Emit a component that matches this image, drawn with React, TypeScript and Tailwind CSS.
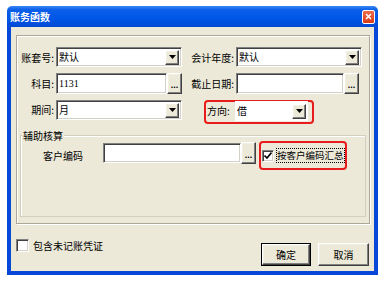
import React from "react";

const raised =
  "bg-[#ece9d8] border border-t-white border-l-white border-r-[#404040] border-b-[#404040] shadow-[inset_-1px_-1px_0_#808080,inset_1px_1px_0_#f1efe2]";
const sunken =
  "bg-white border border-t-[#808080] border-l-[#808080] border-r-white border-b-white shadow-[inset_1px_1px_0_#404040,inset_-1px_-1px_0_#d4d0c8]";

function DropBtn() {
  return (
    <div className={`w-[14px] h-[15px] flex items-center justify-center ${raised}`}>
      <svg width="7" height="4" viewBox="0 0 7 4">
        <path d="M0 0H7L3.5 4Z" fill="#000" />
      </svg>
    </div>
  );
}

function Combo({ text, w, plain }: { text: string; w: string; plain?: boolean }) {
  return (
    <div
      className={`${w} h-[20px] flex items-center pl-[2px] pr-[2px] ${
        plain ? "bg-white" : sunken
      }`}
    >
      <span className="flex-1 leading-none">{text}</span>
      <DropBtn />
    </div>
  );
}

function Dots({ h = "h-[21px]" }: { h?: string }) {
  return (
    <div className={`w-[15px] ${h} flex items-end justify-center pb-[3px] ${raised}`}>
      <span className="text-[9px] leading-none font-['Liberation_Sans',sans-serif] font-bold">...</span>
    </div>
  );
}

export default function App() {
  return (
    <div className="w-[387px] h-[282px] bg-white pt-[6px] pl-[7px] font-['Noto_Sans_CJK_SC','Noto_Sans',sans-serif] text-[10px] text-black">
      <div className="w-[371px] h-[269px] flex flex-col">
        {/* title bar */}
        <div className="h-[21px] rounded-t-[5px] bg-[linear-gradient(180deg,#3b87f5_0%,#0a5fea_18%,#0056e6_60%,#0049d4_100%)] flex items-center pl-[3px] pr-[3px]">
          <span className="text-white font-bold text-[10px] leading-none flex-1">账务函数</span>
          <div className="w-[13px] h-[14px] rounded-[2px] border border-white bg-[linear-gradient(180deg,#ee6a4a,#d83a18)] flex items-center justify-center">
            <svg width="7" height="7" viewBox="0 0 7 7">
              <path d="M1 1L6 6M6 1L1 6" stroke="#fff" strokeWidth="1.6" />
            </svg>
          </div>
        </div>
        {/* body */}
        <div className="flex-1 bg-[#ece9d8] border-l-[4px] border-r-[4px] border-b-[4px] border-[#0848d8] flex flex-col">
          {/* outer panel */}
          <div className="mt-[8px] ml-[5px] w-[354px] h-[189px] border border-[#aca899] shadow-[inset_1px_1px_0_#fff,1px_1px_0_#fff] pt-[11px]">
            {/* row 1 */}
            <div className="flex items-center h-[20px]">
              <span className="w-[37px] text-right">账套号:</span>
              <div className="ml-[2px]">
                <Combo text="默认" w="w-[126px]" />
              </div>
              <span className="w-[52px] text-right">会计年度:</span>
              <div className="ml-[2px]">
                <Combo text="默认" w="w-[126px]" />
              </div>
            </div>
            {/* row 2 */}
            <div className="flex items-center h-[21px] mt-[6px]">
              <span className="w-[37px] text-right">科目:</span>
              <div className="ml-[2px] flex">
                <div className={`w-[111px] h-[21px] flex items-center pl-[2px] ${sunken}`}>
                  <span className="font-['Liberation_Serif',serif] text-[10px] leading-none">1131</span>
                </div>
                <Dots />
              </div>
              <span className="w-[52px] text-right">截止日期:</span>
              <div className="ml-[2px] flex">
                <div className={`w-[108px] h-[21px] ${sunken}`} />
                <div className="w-[18px]">
                  <Dots h="h-[21px]" />
                </div>
              </div>
            </div>
            {/* row 3 */}
            <div className="flex items-start h-[24px] mt-[6px]">
              <span className="w-[37px] text-right leading-[20px]">期间:</span>
              <div className="ml-[2px]">
                <Combo text="月" w="w-[126px]" />
              </div>
              <div className="ml-[22px] w-[110px] h-[24px] border-2 border-[#e81c1c] rounded-[4px] flex items-start">
                <span className="ml-[1px] w-[27px] leading-[18px]">方向:</span>
                <div className="ml-[1px] -mt-[1px]">
                  <Combo text="借" w="w-[73px]" plain />
                </div>
              </div>
            </div>
            {/* group box */}
            <div className="relative ml-[3px] mt-[11px] w-[346px] h-[82px] border border-[#d0d0bf] shadow-[inset_1px_1px_0_#fff] pt-[5px]">
              <span className="absolute -top-[7px] left-[1px] px-[1px] bg-[#ece9d8] leading-[13px]">
                辅助核算
              </span>
              <div className="flex items-start">
                <span className="ml-[22px] w-[40px] leading-[29px]">客户编码</span>
                <div className={`ml-[20px] mt-[2px] w-[138px] h-[20px] ${sunken}`} />
                <div className="mt-[1px]">
                  <Dots h="h-[22px]" />
                </div>
                <div className="ml-[3px] w-[88px] h-[29px] border-2 border-[#e81c1c] rounded-[4px] flex items-center">
                  <div className={`ml-[1px] w-[12px] h-[12px] shrink-0 flex items-center justify-center ${sunken}`}>
                    <svg width="8" height="7" viewBox="0 0 8 7">
                      <path d="M0.5 3.5L3 6L7.5 0.5" stroke="#000" strokeWidth="1.6" fill="none" />
                    </svg>
                  </div>
                  <span className="ml-[2px] border border-dotted border-black text-[9.5px] leading-[13px] whitespace-nowrap">
                    按客户编码汇总
                  </span>
                </div>
              </div>
            </div>
          </div>
          {/* bottom */}
          <div className="flex items-start mt-[15px]">
            <div className={`ml-[5px] w-[13px] h-[13px] ${sunken}`} />
            <span className="ml-[4px] leading-[13px]">包含未记账凭证</span>
            <div className="ml-auto mr-[5px] mt-[4px] flex gap-[7px]">
              <div className="w-[50px] h-[23px] border border-black">
                <div className={`w-full h-full flex items-center justify-center ${raised}`}>确定</div>
              </div>
              <div className={`w-[51px] h-[23px] flex items-center justify-center ${raised}`}>取消</div>
            </div>
          </div>
        </div>
      </div>
    </div>
  );
}
